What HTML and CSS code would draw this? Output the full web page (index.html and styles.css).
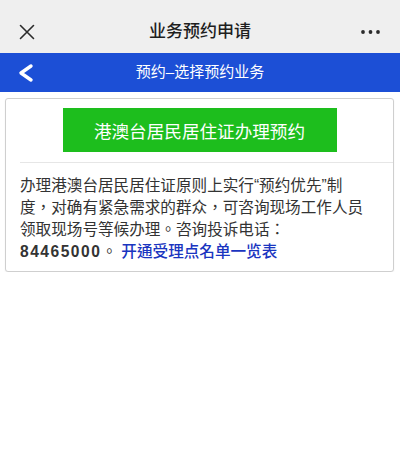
FILE: index.html
```html
<!DOCTYPE html>
<html lang="zh-CN">
<head>
<meta charset="utf-8">
<title>业务预约申请</title>
<link rel="stylesheet" href="styles.css">
</head>
<body>
<header class="topbar">
  <svg class="icon-close" width="16" height="16" viewBox="0 0 16 16"><path d="M1.5 1.5 L14.5 14.5 M14.5 1.5 L1.5 14.5" stroke="#2b2b2b" stroke-width="1.6" fill="none" stroke-linecap="round"/></svg>
  <h1 class="title">业务预约申请</h1>
  <svg class="icon-more" width="22" height="6" viewBox="0 0 22 6"><circle cx="3" cy="3" r="1.9" fill="#2b2b2b"/><circle cx="10.5" cy="3" r="1.9" fill="#2b2b2b"/><circle cx="18" cy="3" r="1.9" fill="#2b2b2b"/></svg>
</header>
<nav class="navbar">
  <svg class="icon-back" width="16" height="20" viewBox="0 0 16 20"><path d="M13 3 L3 10 L13 17" stroke="#ffffff" stroke-width="3.4" fill="none" stroke-linecap="round" stroke-linejoin="round"/></svg>
  <span class="nav-title">预约–选择预约业务</span>
</nav>
<main class="card">
  <div class="btn-wrap">
    <a class="btn-green">港澳台居民居住证办理预约</a>
  </div>
  <div class="divider"></div>
  <p class="desc" lang="zh-TW">办理港澳台居民居住证原则上实行“预约优先”制度，对确有紧急需求的群众，可咨询现场工作人员领取现场号等候办理。咨询投诉电话：<span class="nowrap"><b class="phone">84465000</b>。</span> <a class="link">开通受理点名单一览表</a></p>
</main>
</body>
</html>
```
FILE: styles.css
```css
* { box-sizing: border-box; }
html, body {
  margin: 0;
  padding: 0;
  background: #ffffff;
  font-family: "Liberation Sans", "Noto Sans CJK SC", sans-serif;
}
.topbar {
  height: 53px;
  background: #efefef;
  display: flex;
  align-items: center;
  justify-content: space-between;
  padding: 10px 18px 0 19px;
  position: relative;
}
.icon-close { display: block; }
.icon-more { display: block; }
.title {
  margin: 0;
  font-size: 17px;
  font-weight: 500;
  color: #1e1e1e;
  position: absolute;
  left: 0;
  right: 0;
  text-align: center;
  top: 20px;
  line-height: 24px;
  pointer-events: none;
}
.navbar {
  height: 39px;
  background: #1c4fd6;
  display: flex;
  align-items: center;
  position: relative;
  padding-left: 18px;
}
.icon-back { display: block; }
.nav-title {
  position: absolute;
  left: 0;
  right: 0;
  text-align: center;
  color: #ffffff;
  font-size: 15px;
  line-height: 20px;
  top: 9px;
}
.card {
  margin: 6px 6px 0 5px;
  border: 1px solid #cfcfcf;
  border-radius: 3px;
  box-shadow: 0 1px 2px rgba(0,0,0,0.06);
  background: #fff;
}
.btn-wrap {
  display: flex;
  justify-content: center;
  padding: 9px 0 10px 0;
}
.btn-green {
  width: 274px;
  height: 44px;
  background: #1dbe1d;
  color: #ffffff;
  font-size: 17.6px;
  display: flex;
  align-items: center;
  justify-content: center;
}
.divider {
  height: 1px;
  background: #e6e6e6;
  margin-left: 14px;
}
.desc {
  margin: 0;
  padding: 12px 23px 8px 14px;
  font-family: "Liberation Sans", "Noto Sans CJK TC", sans-serif;
  font-size: 15.6px;
  line-height: 22px;
  color: #333333;
}
.nowrap { white-space: nowrap; }
.phone {
  font-weight: bold;
  letter-spacing: 1.5px;
  color: #333333;
}
.link {
  color: #1a35c0;
  font-weight: 500;
}
```
